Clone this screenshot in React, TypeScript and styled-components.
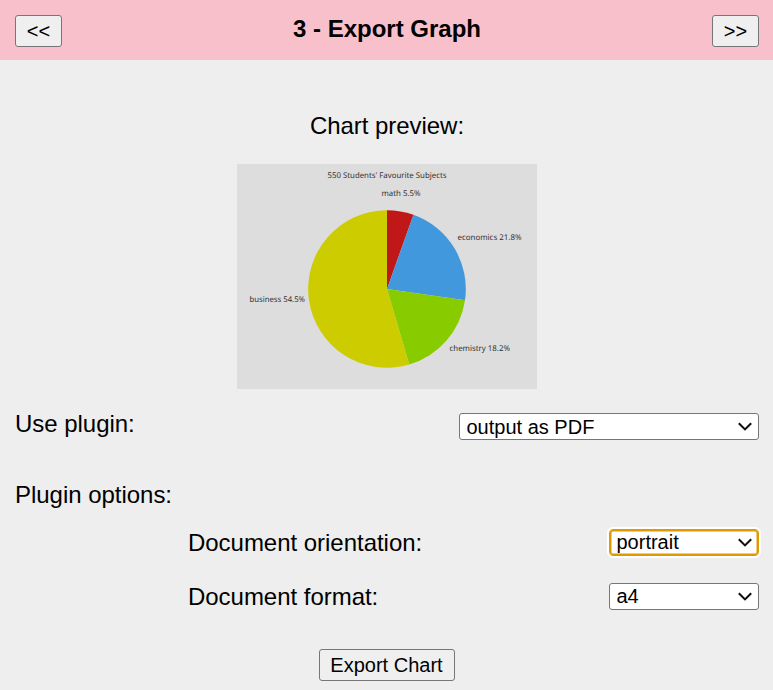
import React from "react";
import styled, { createGlobalStyle, css } from "styled-components";

const GlobalStyle = createGlobalStyle`
  * { box-sizing: border-box; }
  body {
    margin: 0;
    background: #eeeeee;
    color: #000;
    font: 24px/28px "Liberation Sans", Arial, sans-serif;
    overflow: hidden;
  }
`;

const Page = styled.main`
  height: 690px;
  display: flex;
  flex-direction: column;
`;

const Header = styled.header`
  height: 60px;
  flex: none;
  padding: 15px 14px 0 15px;
  display: flex;
  justify-content: space-between;
  align-items: flex-start;
  background: #f8c0cb;
`;

const Title = styled.h1`
  margin: 0;
  font-size: 24px;
  line-height: 28px;
`;

const Button = styled.button<{ $width: number }>`
  width: ${(p) => p.$width}px;
  height: 32px;
  flex: none;
  padding: 0;
  border: 1px solid #767676;
  border-radius: 3px;
  background: #efefef;
  color: #000;
  font: 20px/28px "Liberation Sans", Arial, sans-serif;
`;

const Preview = styled.section`
  margin-top: 52px;
  height: 277px;
  flex: none;
  display: flex;
  flex-direction: column;
  align-items: center;
  gap: 24px;
`;

const PreviewTitle = styled.span`
  padding-left: 1px;
  letter-spacing: -0.05px;
`;

const Chart = styled.svg`
  display: block;
  width: 300px;
  height: 225px;
  flex: none;
  background: #dddddd;
`;

const ChartLabel = styled.text`
  font-family: "Noto Sans", sans-serif;
  font-size: 8px;
  fill: #333;
  text-rendering: geometricPrecision;
`;

const Row = styled.label<{ $top: number; $indent?: boolean }>`
  display: flex;
  flex: none;
  justify-content: space-between;
  align-items: flex-start;
  height: 28px;
  margin-top: ${(p) => p.$top}px;
  padding-right: 14px;
  padding-left: ${(p) => (p.$indent ? 188 : 15)}px;
  letter-spacing: -0.03px;
`;

const SelectField = styled.span<{ $width: number; $active?: boolean; $offset: number }>`
  display: grid;
  grid-template-columns: 1fr 27px;
  align-items: center;
  width: ${(p) => p.$width}px;
  height: 27px;
  margin-top: ${(p) => p.$offset}px;
  border: 1px solid #767676;
  border-radius: 3px;
  background: #fff;
  ${(p) =>
    p.$active &&
    css`
      border-color: #e09900;
      border-radius: 4px;
      box-shadow: inset 0 0 0 1.5px #e09900, 0 0 0 2px #fff;
    `}
`;

const Select = styled.select<{ $lowered: boolean }>`
  grid-area: 1 / 1 / 2 / 3;
  width: 100%;
  height: 25px;
  padding: ${(p) => (p.$lowered ? 1 : 0)}px 27px 0 6.5px;
  border: 0;
  outline: 0;
  appearance: none;
  background: transparent;
  color: #000;
  font: 20px/25px "Liberation Sans", Arial, sans-serif;
`;

const Chevron = styled.svg`
  grid-area: 1 / 2;
  width: 14px;
  height: 9px;
  margin-left: 7px;
  pointer-events: none;
`;

const Footer = styled.footer`
  display: flex;
  flex: none;
  justify-content: center;
  margin-top: 38px;
`;

const slices = [
  { name: "math", value: 30, color: "#c01818" },
  { name: "economics", value: 120, color: "#4298dc" },
  { name: "chemistry", value: 100, color: "#88cc00" },
  { name: "business", value: 300, color: "#cccc00" },
];

const labels = [
  { text: "550 Students' Favourite Subjects", x: 90.5, y: 13.5, width: 119 },
  { text: "math 5.5%", x: 144.5, y: 32, width: 39 },
  { text: "economics 21.8%", x: 220.5, y: 76.3, width: 64 },
  { text: "chemistry 18.2%", x: 212.5, y: 187, width: 60.5 },
  { text: "business 54.5%", x: 12.5, y: 138.4, width: 55.5 },
];

function point(value: number) {
  const angle = (value / 550) * Math.PI * 2;
  return `${150 + Math.sin(angle) * 78.8} ${125 - Math.cos(angle) * 78.8}`;
}

function PieChart() {
  let total = 0;
  return (
    <Chart viewBox="0 0 300 225" role="img">
      {slices.map(({ name, value, color }) => {
        const start = point(total);
        total += value;
        return (
          <path
            key={name}
            fill={color}
            d={`M150 125L${start}A78.8 78.8 0 ${value > 275 ? 1 : 0} 1 ${point(total)}Z`}
          />
        );
      })}
      {labels.map(({ text, x, y, width }) => (
        <ChartLabel key={text} x={x} y={y} textLength={width} lengthAdjust="spacingAndGlyphs">
          {text}
        </ChartLabel>
      ))}
    </Chart>
  );
}

type DropdownProps = {
  value: string;
  width: number;
  active?: boolean;
  offset?: number;
  lowered?: boolean;
};

function Dropdown({ value, width, active, offset = 0, lowered = false }: DropdownProps) {
  return (
    <SelectField $width={width} $active={active} $offset={offset}>
      <Select defaultValue={value} $lowered={lowered}>
        <option>{value}</option>
      </Select>
      <Chevron viewBox="0 0 14 9">
        <path d="M0.8 1.3L7 7.4L13.2 1.3" fill="none" stroke="#101010" strokeWidth="2.1" />
      </Chevron>
    </SelectField>
  );
}

export default function App() {
  return (
    <>
      <GlobalStyle />
      <Page>
        <Header>
          <Button $width={47}>&lt;&lt;</Button>
          <Title>3 - Export Graph</Title>
          <Button $width={47}>&gt;&gt;</Button>
        </Header>
        <Preview>
          <PreviewTitle>Chart preview:</PreviewTitle>
          <PieChart />
        </Preview>
        <Row $top={21}>
          Use plugin:
          <Dropdown value="output as PDF" width={300} offset={3} lowered />
        </Row>
        <Row $top={43} as="div">Plugin options:</Row>
        <Row $top={20} $indent>
          Document orientation:
          <Dropdown value="portrait" width={150} active />
        </Row>
        <Row $top={26} $indent>
          Document format:
          <Dropdown value="a4" width={150} />
        </Row>
        <Footer>
          <Button $width={136}>Export Chart</Button>
        </Footer>
      </Page>
    </>
  );
}
